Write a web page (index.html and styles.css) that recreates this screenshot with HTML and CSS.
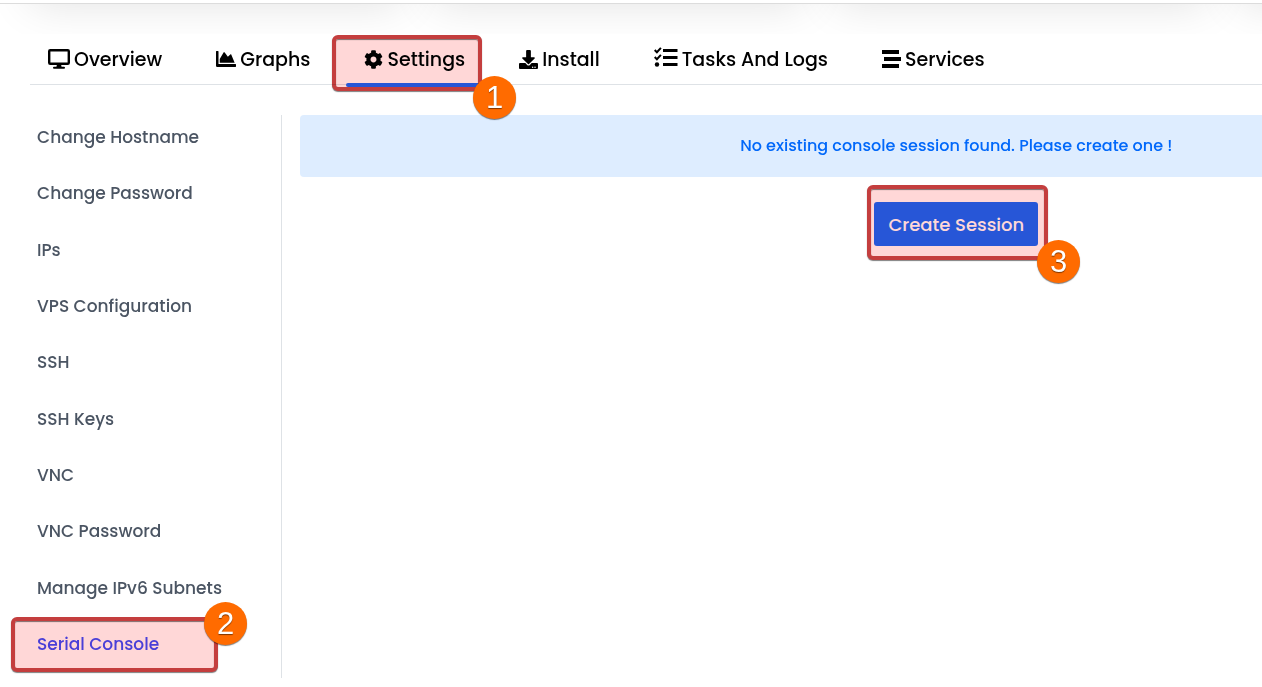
FILE: index.html
```html
<!DOCTYPE html>
<html lang="en">
<head>
  <meta charset="UTF-8">
  <meta name="viewport" content="width=device-width, initial-scale=1.0">
  <title>Serial Console</title>
  <link rel="stylesheet" href="styles.css">
</head>
<body>
  <div class="page">
    <div class="topline"></div>
    <div class="cards">
      <div class="card"></div>
      <div class="card"></div>
      <div class="card"></div>
      <div class="card"></div>
    </div>

    <nav class="tabs">
      <a class="tab" href="#overview">
        <svg class="icon" width="22" height="20" viewBox="0 0 22 20" fill="none" stroke="currentColor"><rect x="1.200" y="1.200" width="19.600" height="13.600" rx="1" stroke-width="2.400"/><path d="M9 15h4l.6 3H8.400z" fill="currentColor" stroke="none"/><path d="M6 18.700h10" stroke-width="2" stroke-linecap="round"/></svg>
        Overview
      </a>
      <a class="tab" href="#graphs">
        <svg class="icon" width="20" height="16" viewBox="0 0 512 410"><path d="M500 333H64V13C64 6 58 1 51 1H12C5 1 0 6 0 13v372c0 13 11 24 24 24h476c7 0 12-5 12-12v-52c0-7-5-12-12-12zM373 85l-69 64-86-115c-5-7-16-6-21 1L96 204v97h382L390 90c-3-7-11-9-17-5z" fill="currentColor"/></svg>
        Graphs
      </a>
      <a class="tab active" href="#settings">
        <svg class="icon" width="19" height="19" viewBox="0 0 512 512"><path d="M487.400 315.700l-42.600-24.600c4.300-23.200 4.300-47 0-70.200l42.600-24.600c4.900-2.800 7.100-8.600 5.500-14-11.100-35.600-30-67.800-54.700-94.600-3.800-4.100-10-5.100-14.800-2.300L380.800 110c-17.900-15.400-38.500-27.300-60.800-35.100V25.800c0-5.600-3.900-10.500-9.400-11.700-36.700-8.200-74.300-7.800-109.200 0-5.500 1.200-9.400 6.100-9.400 11.700V75c-22.200 7.900-42.800 19.800-60.800 35.100L88.700 85.500c-4.900-2.800-11-1.900-14.800 2.300-24.700 26.700-43.600 58.900-54.700 94.600-1.700 5.400.6 11.200 5.500 14L67.300 221c-4.300 23.200-4.300 47 0 70.200l-42.600 24.600c-4.900 2.800-7.100 8.600-5.500 14 11.100 35.600 30 67.800 54.700 94.600 3.800 4.100 10 5.100 14.800 2.300l42.600-24.600c17.900 15.400 38.500 27.300 60.800 35.100v49.200c0 5.600 3.900 10.500 9.400 11.700 36.700 8.200 74.300 7.800 109.200 0 5.500-1.200 9.400-6.100 9.400-11.700v-49.200c22.200-7.900 42.800-19.800 60.800-35.100l42.600 24.600c4.900 2.800 11 1.900 14.800-2.300 24.700-26.700 43.600-58.900 54.700-94.600 1.500-5.500-.7-11.300-5.600-14.100zM256 336c-44.100 0-80-35.900-80-80s35.900-80 80-80 80 35.900 80 80-35.900 80-80 80z" fill="currentColor"/></svg>
        Settings
        <span class="highlight highlight-tab"></span>
        <span class="badge badge-tab">1</span>
      </a>
      <a class="tab" href="#install">
        <svg class="icon" width="19" height="19" viewBox="0 0 512 512"><path d="M216 0h80c13.300 0 24 10.700 24 24v168h87.700c17.800 0 26.700 21.500 14.100 34.100L269.700 378.300c-7.500 7.500-19.800 7.500-27.300 0L90.100 226.100c-12.600-12.600-3.700-34.100 14.100-34.100H192V24c0-13.300 10.700-24 24-24zm296 376v112c0 13.300-10.700 24-24 24H24c-13.300 0-24-10.700-24-24V376c0-13.300 10.700-24 24-24h146.700l49 49c20.100 20.100 52.500 20.100 72.600 0l49-49H488c13.300 0 24 10.700 24 24zm-124 88c0-11-9-20-20-20s-20 9-20 20 9 20 20 20 20-9 20-20zm64 0c0-11-9-20-20-20s-20 9-20 20 9 20 20 20 20-9 20-20z" fill="currentColor"/></svg>
        Install
      </a>
      <a class="tab" href="#tasks">
        <svg class="icon" width="24" height="24" viewBox="0 0 24 24" fill="none" stroke="currentColor"><path d="M9 3.500h14.500M9 10.500h14.500M9 17.500h14.500" stroke-width="3"/><path d="M.7 3l2.200 2.200 4-4.400M.7 10l2.200 2.200 4-4.400" stroke-width="2"/><circle cx="3" cy="17.500" r="2.200" fill="currentColor" stroke="none"/></svg>
        Tasks And Logs
      </a>
      <a class="tab" href="#services">
        <svg class="icon" width="19" height="18" viewBox="0 0 19 18" fill="currentColor"><rect width="17" height="4"/><rect x="2" y="7" width="17" height="4"/><rect y="14" width="17" height="4"/></svg>
        Services
      </a>
    </nav>

    <main class="panel">
      <nav class="sidebar">
        <a class="side-link" href="#hostname">Change Hostname</a>
        <a class="side-link" href="#password">Change Password</a>
        <a class="side-link" href="#ips">IPs</a>
        <a class="side-link" href="#configuration">VPS Configuration</a>
        <a class="side-link" href="#ssh">SSH</a>
        <a class="side-link" href="#ssh-keys">SSH Keys</a>
        <a class="side-link" href="#vnc">VNC</a>
        <a class="side-link" href="#vnc-password">VNC Password</a>
        <a class="side-link" href="#ipv6">Manage IPv6 Subnets</a>
        <a class="side-link active" href="#console">
          Serial Console
          <span class="highlight highlight-side"></span>
          <span class="badge badge-side">2</span>
        </a>
      </nav>

      <section class="content">
        <div class="alert">No existing console session found. Please create one !</div>
        <div class="action">
          <button class="btn" type="button">Create Session</button>
          <span class="highlight highlight-action"></span>
          <span class="badge badge-action">3</span>
        </div>
      </section>
    </main>
  </div>
</body>
</html>
```
FILE: styles.css
```css
* {
  box-sizing: border-box;
}

body {
  margin: 0;
  background: #fff;
  color: #000;
  font-family: Poppins, Inter, sans-serif;
  font-weight: 500;
  overflow: hidden;
}

a {
  color: inherit;
  text-decoration: none;
}

/* wider than the window, the right side runs off screen */
.page {
  width: 130vw;
}

.topline {
  height: 4px;
  border-bottom: 1px solid #dcdcdc;
}

.cards {
  display: flex;
  gap: 30px;
  height: 30px;
  padding: 0 30px;
  overflow: hidden;
}

.card {
  flex: 1;
  height: 60px;
  margin-top: -60px;
  box-shadow: 0 0 45px rgba(0, 0, 0, 0.12);
}

.tabs {
  display: flex;
  gap: 18px;
  height: 51px;
  margin-left: 30px;
  border-bottom: 1px solid #dee2e6;
}

.tab {
  position: relative;
  display: flex;
  align-items: center;
  gap: 4px;
  padding: 0 18px;
  font-size: 19px;
}

.tab.active::before {
  content: "";
  position: absolute;
  right: 0;
  bottom: -3px;
  left: 0;
  height: 4px;
  border-radius: 2px;
  background: #2766ff;
}

.icon {
  flex: none;
}

.panel {
  display: flex;
  padding: 30px 28px 0 30px;
}

.sidebar {
  display: flex;
  flex-direction: column;
  justify-content: space-between;
  width: 252px;
  min-height: calc(100vh - 124px);
  padding-bottom: 12px;
  border-right: 1px solid #dee2e6;
}

.side-link {
  position: relative;
  padding: 0 7px;
  color: #4b5563;
  font-size: 17px;
  line-height: 44px;
}

.side-link.active {
  color: #4a4bff;
}

.content {
  flex: 1;
  display: flex;
  flex-direction: column;
  align-items: center;
  margin-left: 18px;
}

.alert {
  width: 100%;
  padding: 19px;
  border-radius: 4px;
  background: #deedff;
  color: #0168fa;
  font-size: 16px;
  line-height: 24px;
  text-align: center;
}

.action {
  position: relative;
  margin-top: 25px;
}

.btn {
  display: block;
  height: 44px;
  padding: 0 14px;
  border: none;
  border-radius: 3px;
  background: #2766ff;
  color: #fff;
  font: inherit;
  font-size: 18px;
  cursor: pointer;
}

/* callouts */
.highlight {
  position: absolute;
  border: 4px solid #c43e3e;
  border-radius: 6px;
  background: #ffd7d7;
  box-shadow: 0 1px 1px rgba(0, 0, 0, 0.5), inset 0 1px 1px rgba(0, 0, 0, 0.5);
  mix-blend-mode: multiply;
  pointer-events: none;
}

.highlight-tab {
  inset: 1px 1px -7px -14px;
}

.highlight-side {
  inset: -5px 63px -6px -19px;
}

.highlight-action {
  inset: -17px -10px -14px -7px;
}

.badge {
  position: absolute;
  z-index: 1;
  width: 43px;
  height: 43px;
  border-radius: 50%;
  background: #ff6b00;
  box-shadow: 0 1px 1px rgba(0, 0, 0, 0.5);
  color: #fff;
  font: 31px/43px "Liberation Sans", Arial, sans-serif;
  text-align: center;
  text-shadow: 0 1px 1px rgba(0, 0, 0, 0.5);
}

.badge-tab {
  top: 42px;
  right: -33px;
}

.badge-side {
  top: -20px;
  right: 34px;
}

.badge-action {
  top: 38px;
  right: -42px;
}
```
